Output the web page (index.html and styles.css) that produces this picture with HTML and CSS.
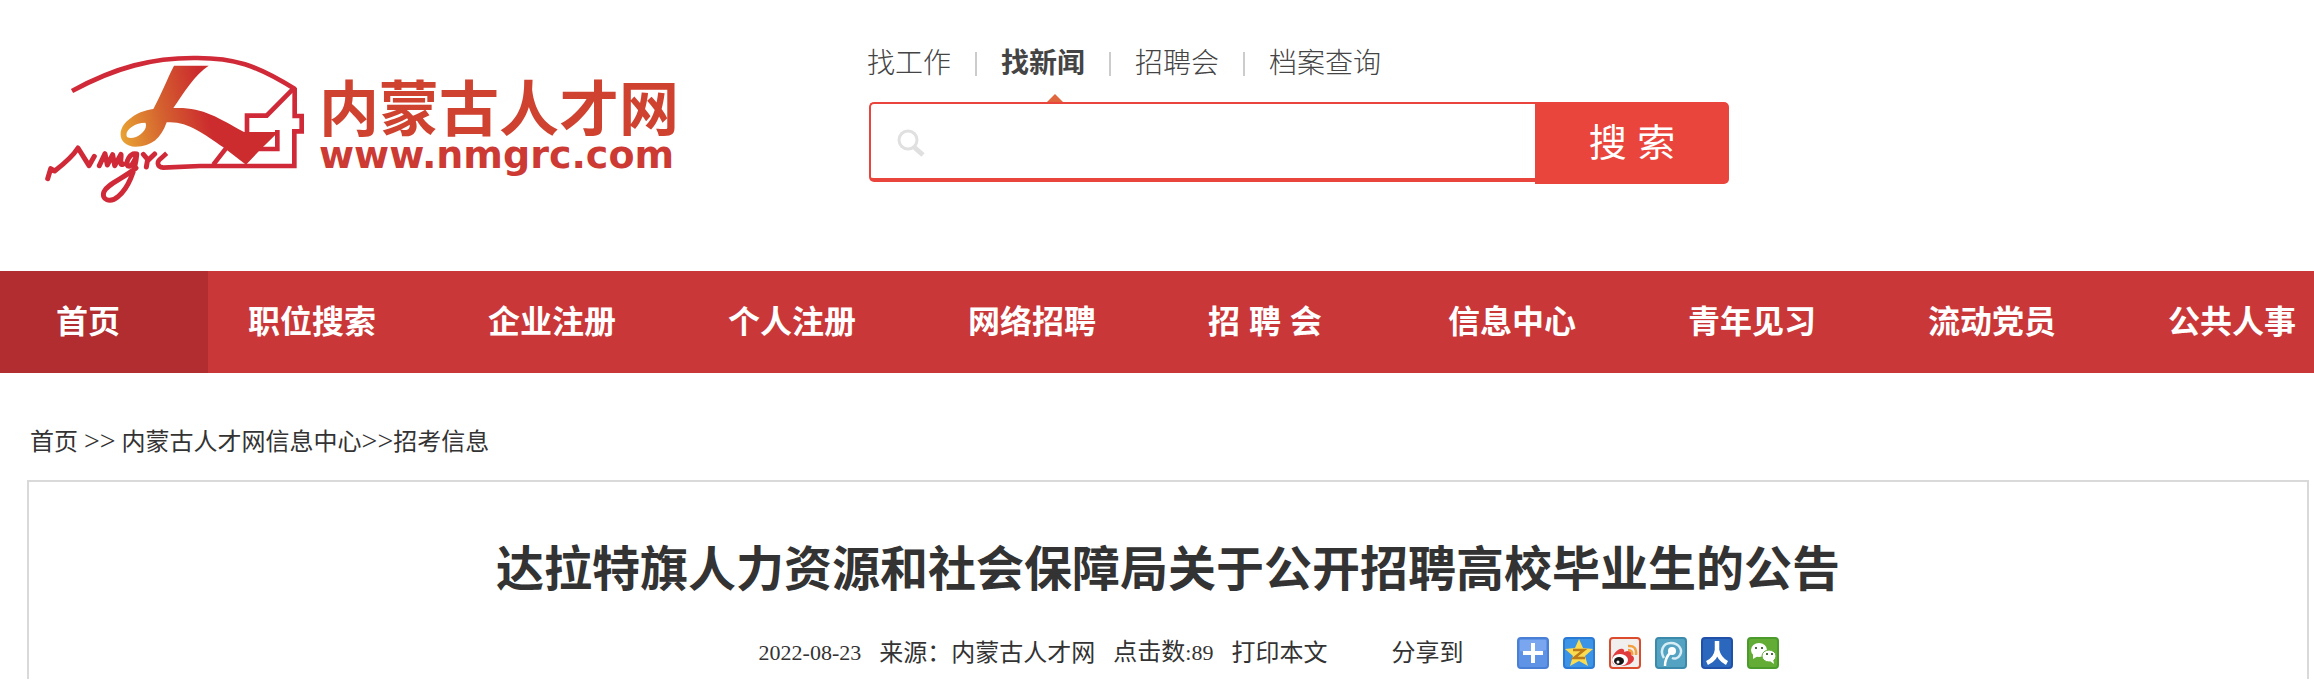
FILE: index.html
```html
<!DOCTYPE html>
<html lang="zh-CN">
<head>
    <meta charset="UTF-8">
    <meta name="viewport" content="width=device-width, initial-scale=1.0">
    <title>达拉特旗人力资源和社会保障局关于公开招聘高校毕业生的公告</title>
    <link rel="stylesheet" href="styles.css">
</head>
<body>
    <header class="header">
        <a class="logo" href="#">
            <svg class="logo-mark" viewBox="75 75 780 450" fill="none" stroke="#d02a38" stroke-width="14" aria-hidden="true">
                <defs>
                    <linearGradient id="ribbon" gradientUnits="userSpaceOnUse" x1="300" y1="300" x2="560" y2="240">
                        <stop offset="0" stop-color="#e8a233"/>
                        <stop offset="0.5" stop-color="#d4612f"/>
                        <stop offset="1" stop-color="#cc2c2e"/>
                    </linearGradient>
                </defs>
                <path d="M156 183C290 110 400 84 520 84C640 82 710 105 826 178"/>
                <path d="M824 174V258H845V304H823V408H540L430 413C410 411 410 395 422 386L440 370"/>
                <path d="M818 178L740 257H681V312M772 300V357H715M622 350L580 404"/>
                <path fill="url(#ribbon)" fill-rule="evenodd" stroke="none" d="M462 107H566C525 133 490 190 460 234C545 230 590 260 672 306H775L722 358L678 404L610 352C550 310 500 272 440 277C423 325 395 350 347 350C295 348 288 300 325 270C348 250 375 240 400 237C425 190 440 150 462 107ZM376 278C340 278 310 305 322 322C345 333 388 300 376 278Z"/>
                <path stroke-width="15" stroke-linecap="round" stroke-linejoin="round" d="M83 446L92 416L104 423C130 403 160 376 174 354L207 407L223 379M238 407L255 371L262 405L278 374L284 407L303 373C305 385 296 410 310 402M350 372C330 366 315 398 324 408C334 412 345 392 350 375C346 420 325 475 295 499C270 521 243 509 252 485C262 462 310 445 348 414M370 373L383 388L379 411M383 392L404 372"/>
            </svg>
            <span class="logo-text">
                <span class="logo-name">内蒙古人才网</span>
                <span class="logo-url">www.nmgrc.com</span>
            </span>
        </a>

        <div class="search">
            <ul class="search-tabs">
                <li><a href="#">找工作</a></li>
                <li class="active"><a href="#">找新闻</a></li>
                <li><a href="#">招聘会</a></li>
                <li><a href="#">档案查询</a></li>
            </ul>
            <form class="search-form">
                <label class="search-field" for="keyword">
                    <svg class="search-icon" viewBox="0 0 28 28" fill="none" stroke="#e0e0e0" aria-hidden="true">
                        <circle cx="11" cy="11" r="9" stroke-width="3"/>
                        <path d="M17 18L26 26" stroke-width="5"/>
                    </svg>
                    <input type="text" id="keyword" aria-label="关键字">
                </label>
                <button type="submit">搜 索</button>
            </form>
        </div>
    </header>

    <nav class="nav">
        <a class="active" href="#">首页</a>
        <a href="#">职位搜索</a>
        <a href="#">企业注册</a>
        <a href="#">个人注册</a>
        <a href="#">网络招聘</a>
        <a href="#">招 聘 会</a>
        <a href="#">信息中心</a>
        <a href="#">青年见习</a>
        <a href="#">流动党员</a>
        <a href="#">公共人事</a>
    </nav>

    <div class="breadcrumb">
        <a href="#">首页</a> <span class="arrows">&gt;&gt;</span> <a href="#">内蒙古人才网信息中心</a><span class="arrows">&gt;&gt;</span><a href="#">招考信息</a>
    </div>

    <main class="article">
        <h1>达拉特旗人力资源和社会保障局关于公开招聘高校毕业生的公告</h1>
        <div class="meta">
            <span class="num">2022-08-23</span>
            <span>来源：内蒙古人才网</span>
            <span>点击数<span class="num">:89</span></span>
            <a href="#">打印本文</a>
            <span class="share-label">分享到</span>
            <div class="share">
                <a href="#" aria-label="更多">
                    <svg viewBox="0 0 32 32">
                        <rect x="1" y="1" width="30" height="30" rx="3" fill="#5f93e6" stroke="#4a7fd6" stroke-width="2"/>
                        <path d="M3 3H29V13Q16 17 3 14Z" fill="#79a6ee"/>
                        <path d="M16 6V26M6 16H26" stroke="#fff" stroke-width="4"/>
                    </svg>
                </a>
                <a href="#" aria-label="QQ空间">
                    <svg viewBox="0 0 32 32">
                        <rect x="1" y="1" width="30" height="30" rx="3" fill="#3c94e6" stroke="#2a79d3" stroke-width="2"/>
                        <path d="M16 2L20 11L30 12L22 19L25 29L16 24L7 29L10 19L2 12L12 11Z" fill="#fbdc50"/>
                        <path d="M10 13H21L11 21H22" fill="none" stroke="#bd7a18" stroke-width="2.5"/>
                    </svg>
                </a>
                <a href="#" aria-label="新浪微博">
                    <svg viewBox="0 0 32 32">
                        <rect x="1" y="1" width="30" height="30" rx="3" fill="#f1efee" stroke="#dc4b2c" stroke-width="2"/>
                        <path d="M3 23C3 17 10 10 14 12C16 13 15 15 15 15C20 13 23 14 22 18C28 20 25 28 14 29C7 29 3 27 3 23Z" fill="#e03a3c"/>
                        <ellipse cx="11" cy="23" rx="8" ry="6" fill="#fff"/>
                        <ellipse cx="10" cy="24" rx="5" ry="4" fill="#161616"/>
                        <circle cx="9" cy="25" r="1.5" fill="#fff"/>
                        <path d="M19 9Q28 8 27 18M19 13Q24 13 23 18" fill="none" stroke="#f2a041" stroke-width="2.5"/>
                    </svg>
                </a>
                <a href="#" aria-label="腾讯微博">
                    <svg viewBox="0 0 32 32">
                        <rect x="1" y="1" width="30" height="30" rx="3" fill="#54a3c2" stroke="#3b89ab" stroke-width="2"/>
                        <path d="M9 21C5 15 7 6 16 6C24 6 28 13 25 18C23 22 19 22 17 21" fill="none" stroke="#d6edf5" stroke-width="2.5"/>
                        <circle cx="17" cy="14" r="4" fill="#fff"/>
                        <path d="M15 16Q10 21 10 29" fill="none" stroke="#fff" stroke-width="2.5"/>
                    </svg>
                </a>
                <a href="#" aria-label="人人网">
                    <svg viewBox="0 0 32 32">
                        <rect x="1" y="1" width="30" height="30" rx="3" fill="#2b67bd" stroke="#2050a8" stroke-width="2"/>
                        <path d="M16 4V13Q15 22 6 26M16 13Q18 22 26 26" fill="none" stroke="#fff" stroke-width="4.5"/>
                    </svg>
                </a>
                <a href="#" aria-label="微信">
                    <svg viewBox="0 0 32 32">
                        <rect x="1" y="1" width="30" height="30" rx="3" fill="#63ac36" stroke="#4b9a2c" stroke-width="2"/>
                        <path d="M6 17L6 22L11 19Z" fill="#fff"/>
                        <ellipse cx="12" cy="13" rx="8" ry="7" fill="#fff"/>
                        <ellipse cx="22" cy="19" rx="7" ry="6" fill="#fff" stroke="#63ac36"/>
                        <path d="M23 24L27 27L26 22Z" fill="#fff"/>
                        <path d="M9 10V12M15 10V12M20 16V18M25 16V18" stroke="#4f6b43" stroke-width="2"/>
                    </svg>
                </a>
            </div>
        </div>
    </main>
</body>
</html>
```
FILE: styles.css
```css
* {
    box-sizing: border-box;
}

body {
    margin: 0;
    background-color: #fff;
    color: #333;
    font-family: "Liberation Serif", "Noto Sans CJK SC", serif;
    font-size: 24px;
    line-height: 36px;
    overflow-x: hidden;
}

a {
    color: inherit;
    text-decoration: none;
}

/* header */
.header {
    display: flex;
    align-items: flex-start;
    padding: 44px 45px 66px;
}

.logo {
    display: flex;
    width: 822px;
    padding-top: 11px;
    gap: 14px;
}

.logo-mark {
    width: 260px;
    height: 150px;
}

.logo-text {
    display: flex;
    flex-direction: column;
    padding-top: 20px;
    font-weight: bold;
    white-space: nowrap;
}

.logo-name {
    font-family: "Noto Sans CJK SC", sans-serif;
    font-size: 60px;
    line-height: 60px;
    color: #cf4230;
}

.logo-url {
    font-family: "DejaVu Sans", sans-serif;
    font-size: 38px;
    line-height: 40px;
    color: #cc3a33;
}

.search {
    width: 862px;
}

.search-tabs {
    display: flex;
    list-style: none;
    margin: 0;
    padding: 0;
    font-size: 28px;
    line-height: 40px;
    font-weight: 300;
    color: #444;
}

.search-tabs li {
    display: flex;
    align-items: center;
    position: relative;
}

.search-tabs li + li::before {
    content: "";
    width: 2px;
    height: 24px;
    margin: 0 24px;
    background-color: #ccc;
}

.search-tabs .active {
    font-weight: bold;
}

.search-tabs .active::after {
    content: "";
    position: absolute;
    right: 22px;
    bottom: -18px;
    border: 8px solid transparent;
    border-top: 0;
    border-bottom-color: #e0673d;
}

.search-form {
    display: flex;
    align-items: flex-start;
    margin: 18px 0 0 2px;
}

.search-field {
    display: flex;
    flex: 1;
    align-items: center;
    height: 80px;
    padding: 4px 0 0 26px;
    border: 2px solid #ea453d;
    border-right: 0;
    border-bottom-width: 4px;
    border-radius: 5px 0 0 5px;
}

.search-icon {
    width: 28px;
    height: 28px;
}

.search-field input {
    flex: 1;
    height: 68px;
    padding: 0 16px;
    border: 0;
    outline: none;
    background: none;
    font: inherit;
}

.search-form button {
    width: 194px;
    height: 82px;
    padding: 0 0 8px;
    border: 0;
    border-radius: 0 5px 5px 0;
    background-color: #ea453d;
    color: #fff;
    font-family: "Liberation Sans", "Noto Sans CJK SC", sans-serif;
    font-size: 38px;
    cursor: pointer;
}

/* main menu */
.nav {
    display: grid;
    grid-template-columns: 208px repeat(9, 240px);
    overflow: hidden;
    background-color: #ca3739;
    color: #fff;
    font-family: "Liberation Sans", "Noto Sans CJK SC", sans-serif;
    font-size: 32px;
    font-weight: bold;
    line-height: 102px;
}

.nav a {
    padding-left: 40px;
    white-space: nowrap;
}

.nav .active {
    padding-left: 56px;
    background-color: #b12d2f;
}

.breadcrumb {
    padding: 50px 30px 20px;
}

.arrows {
    font-size: 28px;
}

/* article */
.article {
    margin: 0 5px 0 27px;
    padding: 52px 20px 8px;
    border: 2px solid #d9d9d9;
    border-bottom: 0;
}

.article h1 {
    margin: 0;
    font-size: 48px;
    line-height: 72px;
    text-align: center;
}

.meta {
    display: flex;
    justify-content: center;
    align-items: center;
    gap: 18px;
    margin-top: 28px;
    padding-left: 202px;
}

.num {
    font-size: 22px;
}

.share-label {
    margin: 0 36px 0 46px;
}

.share {
    display: flex;
    gap: 14px;
}

.share a,
.share svg {
    display: block;
    width: 32px;
    height: 32px;
}
```
